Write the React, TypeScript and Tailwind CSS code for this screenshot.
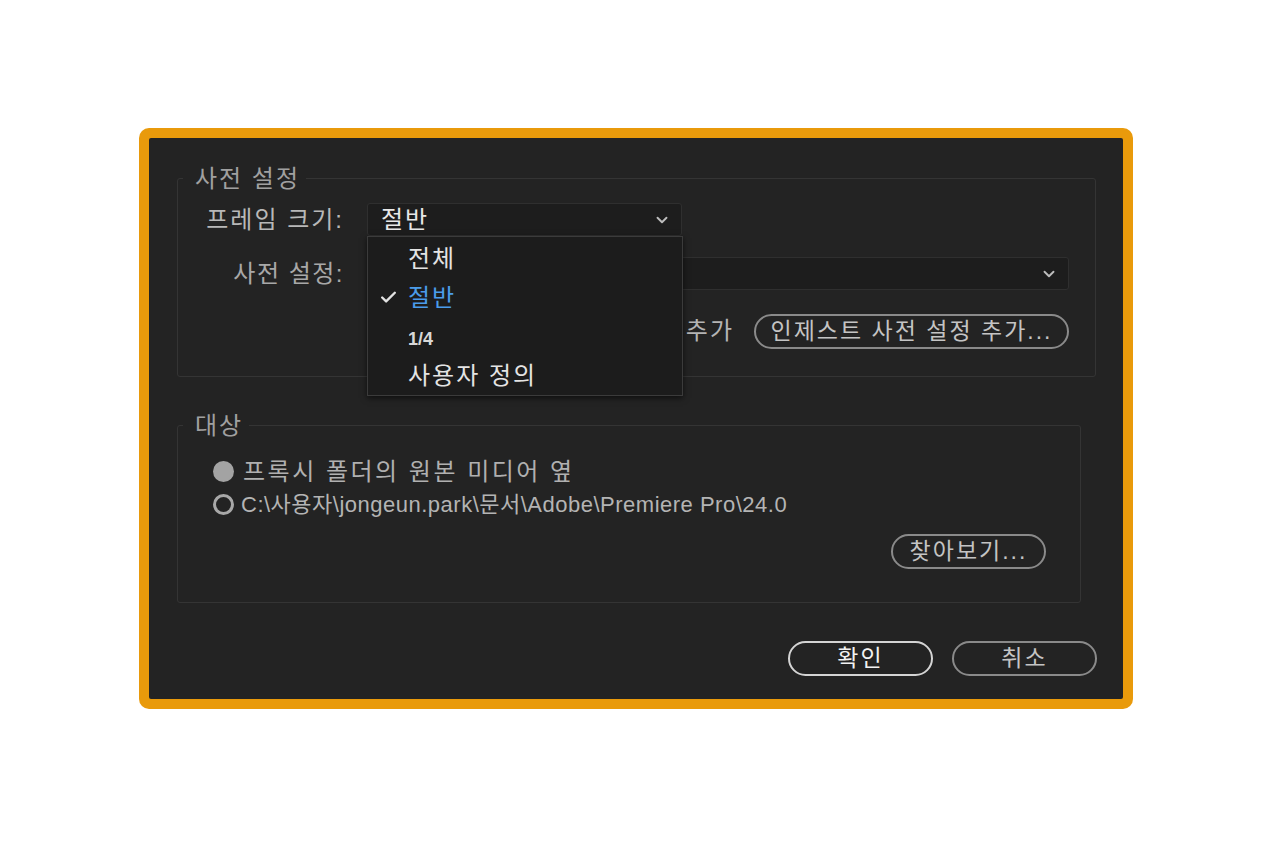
import React from 'react'
import { Check, ChevronDown } from 'lucide-react'

const font = { fontFamily: '"Liberation Sans", "Noto Sans CJK KR", sans-serif' }

const PillButton = ({ label, width, primary = false }: { label: string; width: string; primary?: boolean }) => (
  <button
    className={`${width} h-[35px] rounded-full border-2 flex items-center justify-center text-[23px] leading-none tracking-[2px] ${
      primary ? 'border-[#d4d4d4] text-[#f2f2f2]' : 'border-[#8a8a8a] text-[#c4c4c4]'
    }`}
  >
    {label}
  </button>
)

const Select = ({ value, width }: { value?: string; width: string }) => (
  <div
    className={`${width} h-[33px] rounded-[3px] border border-[#2f2f2f] bg-[#1d1d1d] flex items-center justify-between pl-[13px] pr-[10px]`}
  >
    <span className="text-[24px] leading-none text-[#e8e8e8] tracking-[2px]">{value}</span>
    <ChevronDown size={18} strokeWidth={2.5} className="text-[#bdbdbd]" />
  </div>
)

const menuItems = ['전체', '절반', '1/4', '사용자 정의']

export default function App() {
  return (
    <div className="min-h-screen bg-white flex justify-center pt-[128px] pl-[4px]" style={font}>
      <div className="w-[994px] h-[581px] rounded-[10px] bg-[#e99a0b] p-[10px]">
        <div className="h-full rounded-[2px] bg-[#232323] flex flex-col pl-[28px] pt-[29px]">
          {/* 사전 설정 */}
          <fieldset className="w-[919px] border border-[#343434] rounded-[3px] pl-[5px] pb-[27px]">
            <legend className="pl-[12px] pr-[6px] text-[24px] leading-[23px] text-[#a0a0a0] tracking-[2px]">
              사전 설정
            </legend>
            <div className="grid grid-cols-[161px_702px] gap-x-[23px] mt-[13px]">
              <div className="h-[33px] flex items-center justify-end text-[24px] text-[#b8b8b8] tracking-[2px]">
                프레임 크기:
              </div>
              <div className="relative">
                <Select value="절반" width="w-[315px]" />
                <div className="absolute left-0 top-[33px] z-10 w-[316px] h-[160px] bg-[#1c1c1c] border border-[#3b3b3b] shadow-[0_2px_6px_rgba(0,0,0,0.6)] flex flex-col pt-[2px]">
                  {menuItems.map((item) => {
                    const selected = item === '절반'
                    return (
                      <div key={item} className="h-[39px] flex items-center">
                        <div className="w-[40px] flex justify-center">
                          {selected && <Check size={19} strokeWidth={3} className="text-[#e2e2e2]" />}
                        </div>
                        <span
                          className={`leading-none ${
                            item === '1/4'
                              ? 'text-[18px] font-bold text-[#d8d8d8] tracking-[0px] pt-[5px]'
                              : selected
                                ? 'text-[24px] text-[#4b9cea] tracking-[2px]'
                                : 'text-[24px] text-[#e4e4e4] tracking-[2px]'
                          }`}
                        >
                          {item}
                        </span>
                      </div>
                    )
                  })}
                </div>
              </div>

              <div className="mt-[21px] h-[33px] flex items-center justify-end text-[24px] text-[#a8a8a8] tracking-[1.5px]">
                사전 설정:
              </div>
              <div className="mt-[21px]">
                <Select width="w-[702px]" />
              </div>

              <div />
              <div className="mt-[23px] flex items-center justify-end gap-[20px]">
                <span className="text-[24px] text-[#b4b4b4] tracking-[2px]">인제스트 사전 설정 추가</span>
                <PillButton label="인제스트 사전 설정 추가..." width="w-[315px]" />
              </div>
            </div>
          </fieldset>

          {/* 대상 */}
          <fieldset className="w-[904px] mt-[37px] border border-[#343434] rounded-[3px] pl-[5px] pb-[33px]">
            <legend className="pl-[12px] pr-[6px] text-[24px] leading-[23px] text-[#a0a0a0] tracking-[2px]">
              대상
            </legend>
            <div className="flex flex-col pl-[30px] mt-[18px]">
              <div className="h-[33px] flex items-center gap-[9px]">
                <span className="w-[21px] h-[21px] rounded-full bg-[#a3a3a3]" />
                <span className="text-[24px] text-[#b0b0b0] tracking-[2.5px]">프록시 폴더의 원본 미디어 옆</span>
              </div>
              <div className="h-[33px] flex items-center gap-[7px]">
                <span className="w-[21px] h-[21px] rounded-full border-[3px] border-[#a8a8a8]" />
                <span className="text-[22px] text-[#b4b4b4] tracking-[0.5px]">
                  C:\사용자\jongeun.park\문서\Adobe\Premiere Pro\24.0
                </span>
              </div>
            </div>
            <div className="flex justify-end pr-[34px] mt-[13px]">
              <PillButton label="찾아보기..." width="w-[155px]" />
            </div>
          </fieldset>

          <div className="flex justify-end gap-[19px] pr-[26px] mt-[38px]">
            <PillButton label="확인" width="w-[145px]" primary />
            <PillButton label="취소" width="w-[145px]" />
          </div>
        </div>
      </div>
    </div>
  )
}
